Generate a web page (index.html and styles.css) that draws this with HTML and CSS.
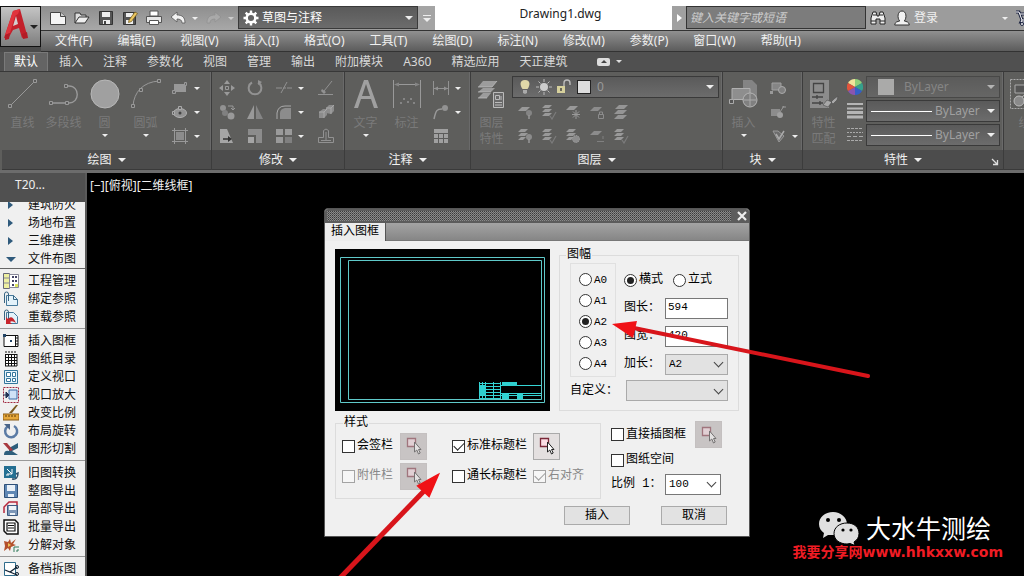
FILE: index.html
```html
<!DOCTYPE html>
<html lang="zh-CN">
<head>
    <meta charset="UTF-8">
    <meta name="viewport" content="width=device-width, initial-scale=1.0">
    <title>Drawing1.dwg</title>
    <link rel="stylesheet" href="styles.css">
</head>
<body>
    <!-- Icon sprite -->
    <svg class="sprite" aria-hidden="true">
        <symbol id="i-logo" viewBox="0 0 38 38">
            <path d="M4 27L12 3l7-2 7 26-5 3-3-10-6 2-4 7-5 1z" fill="#c3202b"/>
            <path d="M15 8l2 8-5 2z" fill="#d4d0d0"/>
            <path d="M12 3l7-2-2 5-3 2-5 17-5 2z" fill="#e0343d"/>
            <path d="M4 27l5-2-1 6-4 1zM21 26l5-2 1 6-5 1z" fill="#b21c26"/>
            <path d="M29 17h8l-4 4z" fill="#222"/>
        </symbol>
        <symbol id="i-new" viewBox="0 0 16 16"><path d="M.5 2.500h10l5 4v8H.5z" fill="#f4f4f4" stroke="#444"/><path d="M10.500 2.500v4h5" fill="#ccc" stroke="#444"/></symbol>
        <symbol id="i-open" viewBox="0 0 16 16"><path d="M1 13V3h5l1 2h5v2" fill="#ddd" stroke="#333"/><path d="M1 13l4-6h10l-4 6z" fill="#eee" stroke="#333"/></symbol>
        <symbol id="i-save" viewBox="0 0 16 16"><path d="M1.500 1.500h13v13h-13z" fill="#555" stroke="#333"/><path d="M4 2h8v5H4zM5 10h7v4H5z" fill="#eee"/><path d="M6 11h2v3H6z" fill="#444"/></symbol>
        <symbol id="i-saveas" viewBox="0 0 16 16"><path d="M1.500 2.500h12v12h-12z" fill="#555" stroke="#333"/><path d="M4 3h7v4H4zM4 10h7v4H4z" fill="#eee"/><path d="M7 10l6-8 2.500 1.500-6 8-3 1z" fill="#e9c460" stroke="#6b5417" stroke-width=".7"/></symbol>
        <symbol id="i-print" viewBox="0 0 16 16"><path d="M4 1h8v5H4z" fill="#fff" stroke="#555"/><path d="M.5 6.500h15v6H.5z" fill="#e6e6e6" stroke="#555"/><path d="M3.500 10.500h9v4h-9z" fill="#fff" stroke="#555"/></symbol>
        <symbol id="i-undo" viewBox="0 0 16 16"><path d="M1 7l6-5v3c5 0 8 2 8 8h-3c0-3-2-4-5-4v3z" fill="#f2f2f2" stroke="#555" stroke-width=".8"/></symbol>
        <symbol id="i-redo" viewBox="0 0 16 16"><path d="M15 7L9 2v3c-5 0-8 2-8 8h3c0-3 2-4 5-4v3z" fill="#b4b4b4" stroke="#8a8a8a" stroke-width=".8"/></symbol>
        <symbol id="i-gear" viewBox="0 0 16 16"><circle cx="8" cy="8" r="4.300" fill="none" stroke="#fff" stroke-width="2.500"/><path d="M8 .5v3M8 12.500v3M.5 8h3M12.500 8h3M2.700 2.700l2 2M11.300 11.300l2 2M2.700 13.300l2-2M11.300 4.700l2-2" stroke="#fff" stroke-width="2.400"/></symbol>
        <symbol id="i-find" viewBox="0 0 16 16"><path d="M1 14V8l2-6h3l1 4h2l1-4h3l2 6v6h-5V9H6v5z" fill="#eee" stroke="#222"/><path d="M1 11h5M10 11h5M3 5h3M10 5h3" stroke="#222"/></symbol>
        <symbol id="i-user" viewBox="0 0 16 16"><path d="M.7 15c0-3 3-3.500 5-4C3 8 3.500 1 8 1s5 7 2.300 10c2 .5 5 1 5 4z" fill="#f2f2f2" stroke="#333"/></symbol>
        <symbol id="i-cart" viewBox="0 0 16 16"><path d="M0 2h3l3 8h9l2-6H4M6 10l-1 2h10" fill="none" stroke="#1c2340" stroke-width="3"/><path d="M0 2h3l3 8h9l2-6H4M6 10l-1 2h10" fill="none" stroke="#fff"/><circle cx="6" cy="14" r="1.500" fill="#fff" stroke="#1c2340"/></symbol>

        <!-- Draw -->
        <symbol id="i-line" viewBox="0 0 30 30"><path d="M2 27L27 2" stroke="#999"/><path d="M.5 25.500h3v3h-3zM25.500.5h3v3h-3z" fill="#5b5b5a" stroke="#999"/></symbol>
        <symbol id="i-pline" viewBox="0 0 30 30"><path d="M1 24h19c11 0 11-17 0-17h-2" fill="none" stroke="#999" stroke-width="1.400"/><path d="M.5 22.500h3v3h-3zM16.500 22.500h3v3h-3zM15.500 5.500h3v3h-3z" fill="#5b5b5a" stroke="#999"/></symbol>
        <symbol id="i-circle" viewBox="0 0 30 30"><circle cx="15" cy="15" r="14" fill="#a0a0a0" stroke="#b8b8b8"/></symbol>
        <symbol id="i-arc" viewBox="0 0 30 30"><path d="M2 27C3 13 12 3 28 2" fill="none" stroke="#999"/><path d="M.5 25.500h3v3h-3zM8.500 9.500h3v3h-3zM26.500.5h3v3h-3z" fill="#5b5b5a" stroke="#999"/></symbol>
        <symbol id="i-rect" viewBox="0 0 16 16"><path d="M2 4h12v8H2z" fill="#989898"/><path d="M.5 10.500h3v3h-3zM12.500 2.500h2v3h-2z" fill="#666" stroke="#999"/></symbol>
        <symbol id="i-ellipse" viewBox="0 0 16 16"><ellipse cx="8" cy="9" rx="6.500" ry="4.500" fill="#929292" stroke="#b0b0b0"/><circle cx="8" cy="9" r="1.500" fill="#444"/><path d="M6.500 2.500h3v3h-3zM.5 7.500h2v3h-2z" fill="#666" stroke="#aaa"/></symbol>
        <symbol id="i-hatch" viewBox="0 0 16 16"><path d="M4 4h8v8H4z" fill="#8c8c8c"/><path d="M2.500 0v16M13.500 0v16M0 2.500h16M0 13.500h16" stroke="#999"/></symbol>

        <!-- Modify -->
        <symbol id="i-move" viewBox="0 0 16 16"><path d="M8 0l3 4H5zM8 16l3-4H5zM0 8l4-3v6zM16 8l-4-3v6z" fill="#9a9a9a"/><path d="M6.500 6.500h3v3h-3z" fill="none" stroke="#9a9a9a"/></symbol>
        <symbol id="i-rotate" viewBox="0 0 16 16"><path d="M5 2.500A6.300 6.300 0 1 0 11 2.500" fill="none" stroke="#929292" stroke-width="2"/><path d="M11 0v5l4-3z" fill="#929292"/></symbol>
        <symbol id="i-trim" viewBox="0 0 16 16"><path d="M0 8h6M7 8h3M11 8h5M5 13l6-11" stroke="#929292"/></symbol>
        <symbol id="i-erase" viewBox="0 0 16 16"><path d="M0 14.500h15M6 11l8-10" stroke="#929292"/><path d="M4 9l4 3-2 2-3-3z" fill="#929292"/></symbol>
        <symbol id="i-copy" viewBox="0 0 16 16"><circle cx="4" cy="4" r="3" fill="#929292"/><circle cx="6" cy="9" r="3" fill="#808080"/><circle cx="12" cy="12" r="3.500" fill="#999"/><path d="M9 2h5v4M12 4l2 2 2-2" fill="none" stroke="#999"/></symbol>
        <symbol id="i-mirror" viewBox="0 0 16 16"><path d="M7 1v14H0z" fill="#999"/><path d="M9 1v14h7z" fill="#858585"/></symbol>
        <symbol id="i-fillet" viewBox="0 0 16 16"><path d="M4 15V9q0-4 5-5h6v11z" fill="#8c8c8c"/><path d="M1 15V9q1-7 8-7h6" fill="none" stroke="#aaa"/></symbol>
        <symbol id="i-explode" viewBox="0 0 16 16"><path d="M1 8l4-3h4v6l-3 3H1zM8 4l3-3h5v6l-3 3-5-1z" fill="#8c8c8c"/><path d="M1 8h5v6M6 8l3-3M8 4h5v6M13 4l3-3" fill="none" stroke="#b0b0b0" stroke-width=".8"/></symbol>
        <symbol id="i-stretch" viewBox="0 0 16 16"><path d="M1 1h7l6 14H1z" fill="#a5a5a5"/><path d="M4 11h6" stroke="#333" stroke-width="1.500"/><path d="M9 8l4 3-4 3z" fill="#333"/></symbol>
        <symbol id="i-scale" viewBox="0 0 16 16"><path d="M1 1h14v14H9V7H1z" fill="#8c8c8c"/><path d="M1 9h6v6H1z" fill="#a5a5a5"/></symbol>
        <symbol id="i-array" viewBox="0 0 16 16"><path d="M0 1h7v6H0zM9 1h7v6H9zM0 9h7v6H0z" fill="#9a9a9a"/><path d="M9 9h7v6H9z" fill="#808080"/></symbol>
        <symbol id="i-offset" viewBox="0 0 16 16"><path d="M5.500 9.500v-7q2.500-3 5 0v7h5v5H.5v-5z" fill="none" stroke="#929292"/><path d="M3 12.500h10M8 4v8" fill="none" stroke="#929292"/></symbol>

        <!-- Annotate -->
        <symbol id="i-text" viewBox="0 0 30 30"><path d="M3 29L13 1h4l10 28h-4l-3-9H10l-3 9zM11 17h8L15 5z" fill="#a0a0a0"/></symbol>
        <symbol id="i-dim" viewBox="0 0 30 30"><path d="M1.500 1v28M28.500 1v28M3 5.500h24" stroke="#999"/><path d="M2 5.500l5-2v4zM28 5.500l-5-2v4zM8 23h2v2H8zM11 19h2v2h-2zM15 22h2v2h-2zM18 19h2v2h-2zM21 23h2v2h-2z" fill="#858585"/></symbol>
        <symbol id="i-linear" viewBox="0 0 16 16"><path d="M.5 1v14M15.500 1v14M1 8.500h14" stroke="#929292"/><path d="M1 8.500l4-2v4zM15 8.500l-4-2v4z" fill="#929292"/></symbol>
        <symbol id="i-leader" viewBox="0 0 16 16"><path d="M1 15C3 6 4 5 9 5" fill="none" stroke="#999" stroke-width="1.500"/><circle cx="12" cy="4" r="3" fill="#929292"/></symbol>
        <symbol id="i-table" viewBox="0 0 16 16"><path d="M1 1h14v14H1z" fill="#a0a0a0"/><path d="M1 5.500h14M1 10.500h14M5.500 5v10M10.500 5v10" stroke="#5b5b5a"/></symbol>

        <!-- Layers -->
        <symbol id="i-layers" viewBox="0 0 30 30"><path d="M6 2h14l-5 6H1zM6 9h12l-4 4H1zM6 14h8l-4 5H1z" fill="#9c9c9c"/><path d="M1 8h14l5-6M1 13h13M1 19h9" fill="none" stroke="#c4c4c4" stroke-width=".7"/><path d="M16.500 13.500h10v15h-10z" fill="#6a6a6a" stroke="#bbb"/><path d="M18.500 16.500h4v4h-4zM18 23.500h7M18 26h7M24 17v4" fill="none" stroke="#bbb"/></symbol>
        <symbol id="i-bulb" viewBox="0 0 16 16"><path d="M8 1c-6 0-5 6-2.500 9h5C13 7 14 1 8 1z" fill="#e0d8a8"/><path d="M6 11h4v3l-2 1-2-1z" fill="#aaa"/></symbol>
        <symbol id="i-sun" viewBox="0 0 16 16"><circle cx="8" cy="8" r="4" fill="#ccc"/><path d="M8 0v3M8 13v3M0 8h3M13 8h3M2.500 2.500l2 2M11.500 11.500l2 2M2.500 13.500l2-2M11.500 4.500l2-2" stroke="#bbb"/></symbol>
        <symbol id="i-lock" viewBox="0 0 16 16"><path d="M2 7h8v7H2z" fill="#d6d09c"/><path d="M9 7V4q0-3 3-3t3 3v2" fill="none" stroke="#bbb" stroke-width="1.400"/><path d="M6 9v3" stroke="#444" stroke-width="1.500"/></symbol>
        <symbol id="i-lay1" viewBox="0 0 16 16"><path d="M5 3h8l-4 4H1z" fill="#999"/><circle cx="12" cy="9" r="3" fill="#858585"/><path d="M12 11v4" stroke="#999" stroke-width="1.500"/></symbol>
        <symbol id="i-lay2" viewBox="0 0 16 16"><path d="M4 1h7L8 4H1zM4 5h7L8 8H1zM4 9h7l-3 3H1z" fill="#999"/><path d="M9 12l2 3 4-7" fill="none" stroke="#7c7c7c" stroke-width="1.200"/></symbol>
        <symbol id="i-lay3" viewBox="0 0 16 16"><path d="M5 2h8L9 6H1z" fill="#999"/><path d="M11 6v9M7 10.500h8M8 7.500l6 6M14 7.500l-6 6" stroke="#999"/></symbol>
        <symbol id="i-lay4" viewBox="0 0 16 16"><path d="M5 3h8L9 7H1z" fill="#8c8c8c"/><path d="M9.500 10.500h5v4h-5zM10.500 10V8h3v2" fill="none" stroke="#8c8c8c"/></symbol>
        <symbol id="i-lay5" viewBox="0 0 16 16"><path d="M6 1h9l-4 4H2zM5 6h9l-4 4H1zM5 11h9l-4 4H1z" fill="#959595"/></symbol>
        <symbol id="i-lay6" viewBox="0 0 16 16"><path d="M4 1h7L8 4H1zM4 5h7L8 8H1zM4 9h5l-3 3H1z" fill="#999"/><circle cx="12" cy="9" r="3" fill="#8c8c8c"/><path d="M12 11v4" stroke="#999" stroke-width="1.500"/></symbol>
        <symbol id="i-lay7" viewBox="0 0 16 16"><path d="M4 1h7L8 4H1zM4 5h7L8 8H1zM4 9h5l-3 3H1z" fill="#999"/><circle cx="11" cy="11" r="3.500" fill="#8c8c8c" stroke="#a5a5a5" stroke-dasharray="1 1"/></symbol>
        <symbol id="i-lay8" viewBox="0 0 16 16"><path d="M5 3h8L9 7H1z" fill="#8c8c8c"/><path d="M8 13.500h7M14 8v3" fill="none" stroke="#808080"/></symbol>

        <!-- Block -->
        <symbol id="i-insert" viewBox="0 0 30 30"><path d="M14 1h9l5 5v12H14z" fill="#848484"/><path d="M3 9.500h18v11H3z" fill="#8e8e8e" stroke="#b0b0b0"/><circle cx="21" cy="21" r="7" fill="#808080" stroke="#b5b5b5"/><path d="M21 15v12M15 21h12" stroke="#aaa"/><path d="M.5 20.500h4v4h-4z" fill="#555" stroke="#aaa"/></symbol>
        <symbol id="i-blk1" viewBox="0 0 16 16"><path d="M2 3h9v7H2z" fill="#858585" stroke="#a0a0a0"/><circle cx="12" cy="10" r="3.500" fill="#808080" stroke="#aaa"/><path d="M0 11h3v3H0z" fill="#999"/></symbol>
        <symbol id="i-blk2" viewBox="0 0 16 16"><path d="M1 5h9v7H1z" fill="#8c8c8c"/><circle cx="10" cy="11" r="3" fill="#a0a0a0"/><path d="M10 8l4-6M12 3h4" stroke="#999"/></symbol>
        <symbol id="i-blk3" viewBox="0 0 16 16"><path d="M3 3h5l6 5-5 6z" fill="#6c6c6c" stroke="#999"/><path d="M6 6l3 5 5-8" fill="none" stroke="#aaa" stroke-width="1.500"/></symbol>

        <!-- Properties -->
        <symbol id="i-match" viewBox="0 0 30 30"><path d="M1 1h19v28H1z" fill="#8c8c8c"/><path d="M4.500 4.500h10v9h-10zM3 18h11M3 24h11M8 16v4M11 22v4" fill="none" stroke="#444" stroke-width="1.300"/><path d="M14 26l4-5 5 2-4 5zM22 23l3-3 4-3-1 4-4 4z" fill="#a8a8a8" stroke="#4c4c4c" stroke-width=".6"/></symbol>
        <symbol id="i-wheel" viewBox="0 0 16 16"><path d="M8 8V0a8 8 0 0 0-7 4z" fill="#f0e49a"/><path d="M8 8V0a8 8 0 0 1 7 4z" fill="#8fd07a"/><path d="M8 8l7-4a8 8 0 0 1 0 8z" fill="#35a08c"/><path d="M8 8l7 4a8 8 0 0 1-7 4z" fill="#355fc8"/><path d="M8 8v8a8 8 0 0 1-7-4z" fill="#8a55b0"/><path d="M8 8l-7 4a8 8 0 0 1 0-8z" fill="#e2543c"/></symbol>
        <symbol id="i-weight" viewBox="0 0 16 16"><path d="M0 1h16M0 5.500h16" stroke="#b5b5b5" stroke-width="2"/><path d="M0 9.500h16M0 14h16" stroke="#b5b5b5" stroke-width="3"/></symbol>
        <symbol id="i-ltype" viewBox="0 0 16 16"><path d="M0 1.500h16M0 13.500h16" stroke="#aaa" stroke-dasharray="3 1"/><path d="M0 5.500h16" stroke="#aaa" stroke-dasharray="2 1"/><path d="M0 9.500h16" stroke="#aaa" stroke-dasharray="4 2"/></symbol>
        <symbol id="i-launch" viewBox="0 0 8 8"><path d="M1 1l5 5M6.500 2v4.500H2" fill="none" stroke="#ddd" stroke-width="1.300"/></symbol>
        <symbol id="i-group" viewBox="0 0 30 30"><path d="M.5.500h29v29H.5z" fill="none" stroke="#aaa" stroke-dasharray="2 1"/><path d="M5 6h14v8H5z" fill="#555" stroke="#aaa"/><circle cx="9" cy="22" r="5" fill="#8a8a8a" stroke="#bbb"/><path d="M12 18l5-4" stroke="#bbb"/></symbol>

        <!-- Tool palette -->
        <symbol id="i-project" viewBox="0 0 16 16"><path d="M.5.500h6v15h-6z" fill="#eef0a0" stroke="#667"/><path d="M6.500 1.500h9v13h-9zM1 5h5M1 10h5" fill="#fff" stroke="#889"/><path d="M9 3h2v2H9zM12 3h2v2h-2zM9 7h2v2H9zM12 7h2v2h-2zM9 11h2v2H9z" fill="#446"/><path d="M12 11h3v3h-3z" fill="#dbe45e"/></symbol>
        <symbol id="i-bind" viewBox="0 0 16 16"><path d="M3.500 4.500h7l4 4v6h-11z" fill="#e4f2fa" stroke="#47799b"/><path d="M10.500 4.500v4h4M1.500 12V3q0-2 2-2t2 2v7" fill="none" stroke="#386583"/></symbol>
        <symbol id="i-reload" viewBox="0 0 16 16"><path d="M3.500 3.500h7l4 4v7h-11z" fill="#e4f2fa" stroke="#47799b"/><path d="M1.500 11V3q0-2 2-2t2 2v7" fill="none" stroke="#386583"/><path d="M3 15V8l2 2q4-5 8 4-4-3-6-1l2 2z" fill="#c8242c"/></symbol>
        <symbol id="i-frame" viewBox="0 0 16 16"><path d="M1 2.500h14v11H1z" fill="#fff" stroke="#111"/><path d="M12.500 2v12" stroke="#111"/><path d="M7 7h2v2H7zM0 1h3v3H0z" fill="#246"/><path d="M13 5h2M13 8h2M13 11h2" stroke="#111"/></symbol>
        <symbol id="i-index" viewBox="0 0 16 16"><path d="M2 3h12v12H2z" fill="#fff"/><path d="M2.500 3v12M5.500 3v12M8.500 3v12M11.500 3v12M14 3v12M2 3.500h12M2 6.500h12M2 9.500h12M2 12.500h12M2 15h12" stroke="#111"/><path d="M2 1h12" stroke="#111" stroke-dasharray="2 1"/></symbol>
        <symbol id="i-views" viewBox="0 0 16 16"><path d="M1.500 1.500h13v13h-13z" fill="#e8f4fc" stroke="#33759b"/><path d="M3.500 3.500h4v4h-4zM9.500 3.500h3v4h-3zM3.500 9.500h4v3h-4zM9.500 9.500h3v3h-3z" fill="#fff" stroke="#33759b"/></symbol>
        <symbol id="i-zoomvp" viewBox="0 0 16 16"><path d="M.5.500h15v15H.5z" fill="none" stroke="#a02840" stroke-dasharray="2 1"/><path d="M6 3h8v9H6z" fill="#cfe1f7" stroke="#3768a8"/><path d="M0 8h5M3 5l3 3-3 3z" fill="#235" stroke="#235"/></symbol>
        <symbol id="i-ratio" viewBox="0 0 16 16"><path d="M0 9h16v6H0z" fill="#e6a83c" stroke="#8a5a14"/><path d="M3 10v2M6 10v2M9 10v2M12 10v2" stroke="#5a3808"/><path d="M6 8l7-8h2L9 8z" fill="#7b5a20"/></symbol>
        <symbol id="i-turn" viewBox="0 0 16 16"><path d="M4.500 3.500A6 6 0 1 0 11 3" fill="none" stroke="#5b7ba5" stroke-width="2.500"/><path d="M1 1h6v6z" fill="#4a6488"/></symbol>
        <symbol id="i-cut" viewBox="0 0 16 16"><path d="M6 7l9-5v5L9 10l6 4H1q0-5 5-4z" fill="#2f5f7c"/><path d="M0 2l4 0 6 7-3 1z" fill="#a83a40"/></symbol>
        <symbol id="i-convert" viewBox="0 0 16 16"><path d="M1 1h12v12H1z" fill="#246f92"/><path d="M4 4l5 5M9 4v5H4M3 10h3" stroke="#fff" fill="none"/><path d="M9 14q6 1 6-6l-2 1" fill="none" stroke="#31506b" stroke-width="1.500"/></symbol>
        <symbol id="i-disk" viewBox="0 0 16 16"><path d="M1.500 1.500h13v13h-13z" fill="#5f87b4" stroke="#2f5078"/><path d="M4 2h8v6H4zM5 11h6v3H5z" fill="#eaf1f8"/></symbol>
        <symbol id="i-part" viewBox="0 0 16 16"><path d="M1 12V6l5-5h8v4" fill="#f4e8ec" stroke="#b8283c" stroke-width="1.500"/><path d="M4.500 4.500h10v10h-10z" fill="#7d97b8" stroke="#3c5a80"/><path d="M6 5h7v4H6zM7 12h5v2H7z" fill="#eef3f8"/></symbol>
        <symbol id="i-batch" viewBox="0 0 16 16"><path d="M1 1h11l3 3v11H4l-3-3z" fill="#fff" stroke="#111" stroke-width="1.500"/><path d="M4 4h8v8H4zM5 6.500h6M5 9h6" fill="none" stroke="#111" stroke-width="1.200"/></symbol>
        <symbol id="i-burst" viewBox="0 0 16 16"><path d="M1 4l4 1 2-3 1 4 5-4-3 5 3 1-5 2-1 4-2-3-4 3 1-5z" fill="#b4502c"/><path d="M5 6l3 2-3 2z" fill="#eec35a"/><path d="M11 15v-5h5M14 15v-2h2" fill="none" stroke="#2f7a5a"/></symbol>
        <symbol id="i-split" viewBox="0 0 16 16"><path d="M1.500 1.500h11v13h-11z" fill="#fff" stroke="#2f6c8c"/><path d="M2 9l5 2 7-5M7 11l7 3" stroke="#123" stroke-width="1.300" fill="none"/><circle cx="14" cy="6" r="1.500" fill="none" stroke="#123"/><circle cx="14" cy="13" r="1.500" fill="none" stroke="#123"/></symbol>

        <symbol id="i-pick" viewBox="0 0 16 18"><path d="M1.500 1.500h8v8h-8z" fill="#fbdde4" stroke="#7a2838" stroke-width="1.300"/><path d="M8.500 5v10l2.300-2 1.700 4 1.700-1-1.700-3.500H15z" fill="#fff" stroke="#222"/></symbol>
        <symbol id="i-wechat" viewBox="0 0 40 34">
            <path d="M14 1C6 1 0 6 0 13c0 4 2 7 5 9l-1 5 5-3h5c8 0 14-5 14-11S22 1 14 1z" fill="#e0e0e0"/>
            <path d="M28 12c-7 0-13 4-13 10.500S21 33 28 33l3-.5 5 2-1-3.500c3-2 5-4.500 5-8.500C40 16 35 12 28 12z" fill="#e0e0e0" stroke="#000"/>
            <circle cx="9" cy="9" r="2"/><circle cx="20" cy="9" r="2"/><circle cx="24" cy="19" r="1.600"/><circle cx="32" cy="19" r="1.600"/>
        </symbol>
    </svg>

    <!-- Application header -->
    <header class="app-header">
        <button class="app-button" aria-label="应用程序"><svg><use href="#i-logo"/></svg></button>
        <div class="app-bars">
            <div class="title-bar">
                <div class="quick-access">
                    <button aria-label="新建"><svg class="icon"><use href="#i-new"/></svg></button>
                    <button aria-label="打开"><svg class="icon"><use href="#i-open"/></svg></button>
                    <button aria-label="保存"><svg class="icon"><use href="#i-save"/></svg></button>
                    <button aria-label="另存为"><svg class="icon"><use href="#i-saveas"/></svg></button>
                    <button aria-label="打印"><svg class="icon"><use href="#i-print"/></svg></button>
                    <button class="with-arrow" aria-label="放弃"><svg class="icon"><use href="#i-undo"/></svg></button>
                    <button class="with-arrow faded" aria-label="重做"><svg class="icon"><use href="#i-redo"/></svg></button>
                </div>
                <div class="combo workspace">
                    <svg class="icon"><use href="#i-gear"/></svg>
                    <select aria-label="工作空间"><option>草图与注释</option></select>
                </div>
                <button class="qa-more" aria-label="自定义快速访问工具栏"></button>
                <h1 class="doc-title">Drawing1.dwg</h1>
                <button class="info-toggle" aria-label="折叠"></button>
                <input class="search" type="text" placeholder="键入关键字或短语" aria-label="搜索">
                <div class="info-center">
                    <button aria-label="搜索"><svg class="icon"><use href="#i-find"/></svg></button>
                    <button class="login"><svg class="icon"><use href="#i-user"/></svg>登录</button>
                    <button class="cart" aria-label="应用商店"><svg class="icon"><use href="#i-cart"/></svg></button>
                </div>
            </div>
            <nav class="menu-bar">
                <a href="#">文件(F)</a>
                <a href="#">编辑(E)</a>
                <a href="#">视图(V)</a>
                <a href="#">插入(I)</a>
                <a href="#">格式(O)</a>
                <a href="#">工具(T)</a>
                <a href="#">绘图(D)</a>
                <a href="#">标注(N)</a>
                <a href="#">修改(M)</a>
                <a href="#">参数(P)</a>
                <a href="#">窗口(W)</a>
                <a href="#">帮助(H)</a>
            </nav>
        </div>
    </header>

    <nav class="ribbon-tabs">
        <a href="#" class="active">默认</a>
        <a href="#">插入</a>
        <a href="#">注释</a>
        <a href="#">参数化</a>
        <a href="#">视图</a>
        <a href="#">管理</a>
        <a href="#">输出</a>
        <a href="#">附加模块</a>
        <a href="#">A360</a>
        <a href="#">精选应用</a>
        <a href="#">天正建筑</a>
        <button class="ribbon-min" aria-label="最小化"><span></span></button>
    </nav>

    <!-- Ribbon -->
    <div class="ribbon">
        <section class="panel panel-draw">
            <div class="panel-body">
                <button class="big"><svg><use href="#i-line"/></svg>直线</button>
                <button class="big"><svg><use href="#i-pline"/></svg>多段线</button>
                <button class="big drop"><svg><use href="#i-circle"/></svg>圆</button>
                <button class="big drop"><svg><use href="#i-arc"/></svg>圆弧</button>
                <div class="tools tools-1">
                    <button class="with-arrow" aria-label="矩形"><svg class="icon"><use href="#i-rect"/></svg></button>
                    <button class="with-arrow" aria-label="椭圆"><svg class="icon"><use href="#i-ellipse"/></svg></button>
                    <button class="with-arrow" aria-label="图案填充"><svg class="icon"><use href="#i-hatch"/></svg></button>
                </div>
            </div>
            <h2>绘图</h2>
        </section>
        <section class="panel panel-modify">
            <div class="panel-body">
                <div class="tools tools-4">
                    <button aria-label="移动"><svg class="icon"><use href="#i-move"/></svg></button>
                    <button aria-label="旋转"><svg class="icon"><use href="#i-rotate"/></svg></button>
                    <button class="with-arrow" aria-label="修剪"><svg class="icon"><use href="#i-trim"/></svg></button>
                    <button aria-label="删除"><svg class="icon"><use href="#i-erase"/></svg></button>
                    <button aria-label="复制"><svg class="icon"><use href="#i-copy"/></svg></button>
                    <button aria-label="镜像"><svg class="icon"><use href="#i-mirror"/></svg></button>
                    <button class="with-arrow" aria-label="圆角"><svg class="icon"><use href="#i-fillet"/></svg></button>
                    <button aria-label="分解"><svg class="icon"><use href="#i-explode"/></svg></button>
                    <button aria-label="拉伸"><svg class="icon"><use href="#i-stretch"/></svg></button>
                    <button aria-label="缩放"><svg class="icon"><use href="#i-scale"/></svg></button>
                    <button class="with-arrow" aria-label="阵列"><svg class="icon"><use href="#i-array"/></svg></button>
                    <button aria-label="偏移"><svg class="icon"><use href="#i-offset"/></svg></button>
                </div>
            </div>
            <h2>修改</h2>
        </section>
        <section class="panel panel-note">
            <div class="panel-body">
                <button class="big drop"><svg><use href="#i-text"/></svg>文字</button>
                <button class="big"><svg><use href="#i-dim"/></svg>标注</button>
                <div class="tools tools-1">
                    <button class="with-arrow" aria-label="线性"><svg class="icon"><use href="#i-linear"/></svg></button>
                    <button class="with-arrow" aria-label="引线"><svg class="icon"><use href="#i-leader"/></svg></button>
                    <button aria-label="表格"><svg class="icon"><use href="#i-table"/></svg></button>
                </div>
            </div>
            <h2>注释</h2>
        </section>
        <section class="panel panel-layer">
            <div class="panel-body">
                <button class="big"><svg><use href="#i-layers"/></svg>图层<br>特性</button>
                <div class="layer-tools">
                    <div class="combo">
                        <svg class="icon"><use href="#i-bulb"/></svg>
                        <svg class="icon"><use href="#i-sun"/></svg>
                        <svg class="icon"><use href="#i-lock"/></svg>
                        <span class="swatch"></span>
                        <select aria-label="图层"><option>0</option></select>
                    </div>
                    <div class="tools tools-5">
                        <button aria-label="关"><svg class="icon"><use href="#i-lay1"/></svg></button>
                        <button aria-label="置为当前"><svg class="icon"><use href="#i-lay2"/></svg></button>
                        <button aria-label="冻结"><svg class="icon"><use href="#i-lay3"/></svg></button>
                        <button aria-label="锁定"><svg class="icon"><use href="#i-lay4"/></svg></button>
                        <button aria-label="匹配图层"><svg class="icon"><use href="#i-lay5"/></svg></button>
                        <button aria-label="打开所有图层"><svg class="icon"><use href="#i-lay6"/></svg></button>
                        <button aria-label="隔离"><svg class="icon"><use href="#i-lay2"/></svg></button>
                        <button aria-label="解冻所有图层"><svg class="icon"><use href="#i-lay7"/></svg></button>
                        <button aria-label="解锁"><svg class="icon"><use href="#i-lay8"/></svg></button>
                        <button aria-label="上一个"><svg class="icon"><use href="#i-lay2"/></svg></button>
                    </div>
                </div>
            </div>
            <h2>图层</h2>
        </section>
        <section class="panel panel-block">
            <div class="panel-body">
                <button class="big drop"><svg><use href="#i-insert"/></svg>插入</button>
                <div class="tools tools-1">
                    <button aria-label="创建"><svg class="icon"><use href="#i-blk1"/></svg></button>
                    <button aria-label="编辑"><svg class="icon"><use href="#i-blk2"/></svg></button>
                    <button class="with-arrow" aria-label="编辑属性"><svg class="icon"><use href="#i-blk3"/></svg></button>
                </div>
            </div>
            <h2>块</h2>
        </section>
        <section class="panel panel-props">
            <div class="panel-body">
                <button class="big"><svg><use href="#i-match"/></svg>特性<br>匹配</button>
                <div class="prop-list">
                    <svg class="icon"><use href="#i-wheel"/></svg>
                    <div class="combo faded"><span class="swatch"></span><select aria-label="颜色"><option>ByLayer</option></select></div>
                    <svg class="icon"><use href="#i-weight"/></svg>
                    <div class="combo"><span class="rule"></span><select aria-label="线宽"><option>ByLayer</option></select></div>
                    <svg class="icon"><use href="#i-ltype"/></svg>
                    <div class="combo"><span class="rule"></span><select aria-label="线型"><option>ByLayer</option></select></div>
                </div>
            </div>
            <h2>特性</h2>
            <button class="launcher" aria-label="特性选项板"><svg><use href="#i-launch"/></svg></button>
        </section>
        <section class="panel panel-group">
            <div class="panel-body">
                <button class="big"><svg><use href="#i-group"/></svg>组</button>
            </div>
            <h2></h2>
        </section>
    </div>

    <!-- Workspace -->
    <main class="workspace-area">
        <aside class="palette">
            <h2>T20...</h2>
            <div class="palette-scroll">
                <ul>
                    <li><a href="#" class="node">建筑防火</a></li>
                    <li><a href="#" class="node">场地布置</a></li>
                    <li><a href="#" class="node">三维建模</a></li>
                    <li class="major"><a href="#" class="node open">文件布图</a></li>
                    <li><a href="#"><svg class="icon"><use href="#i-project"/></svg>工程管理</a></li>
                    <li><a href="#"><svg class="icon"><use href="#i-bind"/></svg>绑定参照</a></li>
                    <li class="last"><a href="#"><svg class="icon"><use href="#i-reload"/></svg>重载参照</a></li>
                    <li><a href="#"><svg class="icon"><use href="#i-frame"/></svg>插入图框</a></li>
                    <li><a href="#"><svg class="icon"><use href="#i-index"/></svg>图纸目录</a></li>
                    <li><a href="#"><svg class="icon"><use href="#i-views"/></svg>定义视口</a></li>
                    <li><a href="#"><svg class="icon"><use href="#i-zoomvp"/></svg>视口放大</a></li>
                    <li><a href="#"><svg class="icon"><use href="#i-ratio"/></svg>改变比例</a></li>
                    <li><a href="#"><svg class="icon"><use href="#i-turn"/></svg>布局旋转</a></li>
                    <li class="last"><a href="#"><svg class="icon"><use href="#i-cut"/></svg>图形切割</a></li>
                    <li><a href="#"><svg class="icon"><use href="#i-convert"/></svg>旧图转换</a></li>
                    <li><a href="#"><svg class="icon"><use href="#i-disk"/></svg>整图导出</a></li>
                    <li><a href="#"><svg class="icon"><use href="#i-part"/></svg>局部导出</a></li>
                    <li><a href="#"><svg class="icon"><use href="#i-batch"/></svg>批量导出</a></li>
                    <li class="last"><a href="#"><svg class="icon"><use href="#i-burst"/></svg>分解对象</a></li>
                    <li><a href="#"><svg class="icon"><use href="#i-split"/></svg>备档拆图</a></li>
                </ul>
            </div>
        </aside>

        <div class="canvas">
            <p class="view-label">[−][俯视][二维线框]</p>

            <!-- Insert frame dialog -->
            <form class="dialog" onsubmit="return false">
                <div class="dialog-title"><span class="grip"></span><button type="button" aria-label="关闭"><svg viewBox="0 0 10 10"><path d="M1 1l8 8M9 1L1 9" stroke="#eee" stroke-width="2.200"/></svg></button></div>
                <div class="dialog-tabs"><button type="button">插入图框</button></div>
                <div class="dialog-body">
                    <div class="dialog-row">
                        <svg class="preview" viewBox="0 0 215 162">
                            <path d="M5.500 8.500h204v145h-204zM13.500 11.500h193v139h-193z" fill="none" stroke="#5fc9c9"/>
                            <path d="M144 134.500h22M144 137.500h22M144 140.500h22M144 143.500h22M144 146.500h62M144 149.500h22M166 136.500h40M166 144.500h40M144.500 133v17M147.500 133v17M150.500 133v17M158.500 133v17M165.500 133v17" stroke="#35d5d5"/>
                            <path d="M145 136h6v10h-6zM167 133h15v4h-15zM167 145h7v5h-7zM182 145h6v5h-6z" fill="#2fd0d0"/>
                        </svg>
                        <fieldset class="size-set">
                            <legend>图幅</legend>
                            <div class="size-grid">
                                <div class="paper">
                                    <label><input type="radio" name="paper">A0</label>
                                    <label><input type="radio" name="paper">A1</label>
                                    <label><input type="radio" name="paper" checked>A2</label>
                                    <label><input type="radio" name="paper">A3</label>
                                    <label><input type="radio" name="paper">A4</label>
                                </div>
                                <div class="dims">
                                    <div class="orient">
                                        <label><input type="radio" name="orient" checked>横式</label>
                                        <label><input type="radio" name="orient">立式</label>
                                    </div>
                                    <div class="field"><label for="len">图长：</label><input id="len" type="text" value="594"></div>
                                    <div class="field"><label for="wid">图宽：</label><input id="wid" type="text" value="420"></div>
                                    <div class="field"><label for="ext">加长：</label><span class="pick-list gray"><select id="ext"><option>A2</option></select></span></div>
                                </div>
                            </div>
                            <div class="field custom"><label for="custom">自定义：</label><span class="pick-list gray"><select id="custom"><option></option></select></span></div>
                        </fieldset>
                    </div>
                    <div class="dialog-row lower">
                        <fieldset class="style-set">
                            <legend>样式</legend>
                            <div class="style-grid">
                                <label><input type="checkbox">会签栏</label>
                                <button type="button" class="pick" disabled aria-label="选择会签栏"><svg><use href="#i-pick"/></svg></button>
                                <label><input type="checkbox" checked>标准标题栏</label>
                                <button type="button" class="pick" aria-label="选择标题栏"><svg><use href="#i-pick"/></svg></button>
                                <label class="off"><input type="checkbox" disabled>附件栏</label>
                                <button type="button" class="pick" disabled aria-label="选择附件栏"><svg><use href="#i-pick"/></svg></button>
                                <label><input type="checkbox">通长标题栏</label>
                                <label class="off"><input type="checkbox" checked disabled>右对齐</label>
                            </div>
                        </fieldset>
                        <div class="options">
                            <div class="option-row">
                                <label><input type="checkbox">直接插图框</label>
                                <button type="button" class="pick" disabled aria-label="选择图框"><svg><use href="#i-pick"/></svg></button>
                            </div>
                            <label><input type="checkbox">图纸空间</label>
                            <div class="field scale"><label for="scale">比例 1：</label><span class="pick-list"><select id="scale"><option>100</option></select></span></div>
                        </div>
                    </div>
                    <div class="actions">
                        <button type="submit">插入</button>
                        <button type="button">取消</button>
                    </div>
                </div>
            </form>

            <div class="watermark">
                <p class="brand"><svg><use href="#i-wechat"/></svg>大水牛测绘</p>
                <p class="site">我要分享网www.hhkxxw.com</p>
            </div>
        </div>
    </main>

    <!-- Callout arrows -->
    <svg class="callouts" viewBox="0 0 1024 576" aria-hidden="true">
        <path d="M868 376L634 328" stroke="#d8151b" stroke-width="4" stroke-linecap="round"/>
        <path d="M612 324l25-3-4 17z" fill="#f01216"/>
        <path d="M340 578L424 491" stroke="#d8151b" stroke-width="5"/>
        <path d="M438 475l-20 11 11 10z" fill="#f01216" stroke="#f01216" stroke-width="2"/>
    </svg>
</body>
</html>
```
FILE: styles.css
```css
/* Global Styles */
* {
    box-sizing: border-box;
}

body {
    margin: 0;
    height: 100vh;
    display: flex;
    flex-direction: column;
    overflow: hidden;
    background-color: #000;
    color: #f0f0f0;
    font-family: "Noto Sans", "Noto Sans CJK SC", sans-serif;
    font-size: 12px;
    line-height: 16px;
}

h1, h2, p, ul {
    margin: 0;
    padding: 0;
    font-size: 12px;
    font-weight: normal;
}

a {
    color: inherit;
    text-decoration: none;
}

button, input, select {
    margin: 0;
    padding: 0;
    border: none;
    background: none;
    color: inherit;
    font: inherit;
}

select {
    appearance: none;
    flex: 1;
    min-width: 0;
}

.sprite {
    position: absolute;
    width: 0;
    height: 0;
}

.icon {
    display: block;
    flex: none;
    width: 16px;
    height: 16px;
}

.faded {
    opacity: 0.6;
}

/* Header */
.app-header {
    display: flex;
    flex: none;
    background-color: #4b4b4b;
}

.app-button {
    width: 41px;
    height: 41px;
    margin-top: 6px;
    border: 1px solid #111;
    background: linear-gradient(#c4c4c4, #7e7e7e);
    box-shadow: 0 -6px #fff;
}

.app-button svg {
    display: block;
    width: 38px;
    height: 38px;
}

.app-bars {
    flex: 1;
    min-width: 0;
}

.title-bar {
    display: flex;
    align-items: stretch;
    height: 31px;
    border-top: 6px solid #fff;
    border-bottom: 1px solid #333;
    background-color: #9c9c9c;
}

.quick-access {
    display: flex;
    align-items: center;
    gap: 8px;
    width: 197px;
    padding-left: 9px;
    background: linear-gradient(#8e8e8e, #a8a8a8);
}

.with-arrow {
    display: flex;
    align-items: center;
    gap: 6px;
}

.with-arrow::after,
.combo::after,
.qa-more::after,
.drop::after,
.panel h2:not(:empty)::after,
.login::after {
    content: "";
    border: 4px solid transparent;
    border-top-color: #eee;
    border-bottom: none;
}

.with-arrow::after,
.drop::after,
.login::after {
    border-width: 3px;
    border-bottom: none;
}

.combo {
    display: flex;
    align-items: center;
    gap: 3px;
    padding: 0 4px;
    border: 1px solid #3a3a3a;
    background: linear-gradient(#5a5a5a, #6c6c6c);
}

.workspace {
    width: 180px;
    height: 23px;
    color: #fff;
}

.qa-more {
    width: 17px;
    height: 24px;
    background-color: #a4a4a4;
}

.qa-more::before {
    content: "";
    display: block;
    width: 8px;
    margin: 0 auto 2px;
    border-top: 1px solid #eee;
}

.qa-more::after {
    display: block;
    width: 0;
    margin: 0 auto;
}

.doc-title {
    flex: 1;
    padding-left: 14px;
    background-color: #fff;
    color: #222;
    font-size: 12px;
    text-align: center;
}

.info-toggle {
    width: 14px;
    padding-left: 5px;
    background-color: #a0a0a0;
}

.info-toggle::before {
    content: "";
    display: block;
    width: 0;
    border: 4px solid transparent;
    border-left: 5px solid #fff;
    border-right: none;
}

.search {
    width: 180px;
    height: 23px;
    padding: 0 3px;
    border: 1px solid #333;
    background-color: #7c7c7c;
}

.search::placeholder {
    color: #ccc;
    font-style: italic;
    opacity: 1;
}

.info-center {
    display: flex;
    align-items: center;
    gap: 8px;
    width: 158px;
    padding-left: 4px;
    overflow: hidden;
    background-color: #9c9c9c;
}

.login {
    display: flex;
    flex: 1;
    align-items: center;
    gap: 4px;
}

.login::after {
    margin-left: auto;
}

.cart {
    width: 8px;
    overflow: hidden;
}

.menu-bar {
    display: flex;
    align-items: center;
    gap: 25px;
    height: 21px;
    padding-left: 14px;
    background: linear-gradient(#909090, #5c5c5c);
    border-bottom: 1px solid #333;
}

/* Ribbon tabs */
.ribbon-tabs {
    display: flex;
    flex: none;
    align-items: stretch;
    height: 20px;
    padding-left: 4px;
    background-color: #505050;
    border-bottom: 1px solid #383838;
    color: #d8d8d8;
}

.ribbon-tabs a {
    padding: 2px 10px;
}

.ribbon-tabs .active {
    margin-right: 1px;
    padding: 1px 9px;
    background-color: #646464;
    border: 1px solid #7a7a7a;
    border-bottom: none;
    color: #fff;
}

.ribbon-min {
    display: flex;
    align-items: center;
    gap: 6px;
    margin-left: 20px;
}

.ribbon-min span {
    display: grid;
    place-items: center;
    width: 13px;
    height: 8px;
    border-radius: 2px;
    background-color: #ddd;
}

.ribbon-min span::before {
    content: "";
    border: 3px solid transparent;
    border-top: none;
    border-bottom-color: #444;
}

.ribbon-min::after {
    content: "";
    border: 3px solid transparent;
    border-top-color: #ddd;
    border-bottom: none;
}

/* Ribbon */
.ribbon {
    display: flex;
    flex: none;
    height: 101px;
    padding-left: 2px;
    overflow: hidden;
    background-color: #5e5e5c;
    border-bottom: 3px solid #6c6c6c;
}

.panel {
    position: relative;
    display: flex;
    flex: none;
    flex-direction: column;
    border-right: 1px solid #3c3c3c;
    box-shadow: inset -1px 0 #6a6a6a;
}

.panel-body {
    display: flex;
    flex: 1;
    padding-top: 4px;
}

.panel h2 {
    display: flex;
    align-items: center;
    justify-content: center;
    gap: 6px;
    height: 20px;
    background-color: #4c4c4c;
    border-bottom: 1px solid #3a3a3a;
}

.panel-draw { width: 210px; }
.panel-modify { width: 133px; }
.panel-note { width: 126px; }
.panel-layer { width: 252px; }
.panel-block { width: 80px; }
.panel-props { width: 201px; }
.panel-group { width: 60px; }

.big {
    display: flex;
    flex: none;
    flex-direction: column;
    align-items: center;
    width: 41px;
    padding-top: 3px;
    color: #7a7a7a;
}

.big svg {
    width: 30px;
    height: 30px;
    margin-bottom: 6px;
}

.drop::after {
    margin-top: 3px;
}

.tools {
    display: grid;
    grid-auto-rows: 24px;
    align-content: start;
    align-items: center;
}

.tools-1 {
    padding-left: 6px;
}

.tools-4 {
    grid-template-columns: 28px 29px 42px 16px;
    padding-left: 7px;
}

.tools-5 {
    grid-template-columns: repeat(5, 24px);
    padding-left: 5px;
}

.layer-tools {
    display: grid;
    flex: 1;
    grid-template-rows: 24px auto;
    padding-right: 3px;
}

.layer-tools .combo {
    height: 22px;
    color: #999;
}

.swatch {
    width: 14px;
    height: 14px;
    margin: 0 3px;
    background-color: #ddd;
    border: 1px solid #222;
}

.prop-list {
    display: grid;
    flex: 1;
    grid-template-columns: 16px 1fr;
    grid-auto-rows: 22px;
    align-items: center;
    gap: 2px 3px;
    padding: 0 3px;
}

.prop-list .combo {
    height: 22px;
    color: #a0a0a0;
}

.prop-list .swatch {
    width: 16px;
    height: 16px;
    margin: 0 7px;
    border: none;
}

.rule {
    width: 61px;
    border-top: 1px solid #fff;
}

.launcher {
    position: absolute;
    right: 4px;
    bottom: 4px;
}

.launcher svg {
    display: block;
    width: 8px;
    height: 8px;
}

/* Palette */
.workspace-area {
    display: flex;
    flex: 1;
    min-height: 0;
}

.palette {
    display: flex;
    flex: none;
    flex-direction: column;
    width: 87px;
    border-right: 2px solid #5a5a5a;
    background-color: #f0f0f0;
    color: #111;
}

.palette h2 {
    flex: none;
    height: 29px;
    padding: 4px 15px;
    background-color: #505050;
    color: #eee;
}

.palette-scroll {
    overflow: hidden;
}

.palette ul {
    margin-top: -6px;
    list-style: none;
}

.palette a {
    display: flex;
    align-items: center;
    gap: 9px;
    height: 18px;
    padding-left: 3px;
}

.palette .node::before {
    content: "";
    width: 0;
    margin: 0 6px 0 5px;
    border: 4px solid transparent;
    border-left: 5px solid #2f5a7c;
    border-right: none;
}

.palette .open::before {
    margin: 0 3px;
    border: 5px solid transparent;
    border-top-color: #2f5a7c;
    border-bottom: none;
}

.palette .major {
    margin-bottom: 3px;
    border-bottom: 1px solid #666;
}

.palette .last {
    margin-bottom: 3px;
    padding-bottom: 2px;
    border-bottom: 1px solid #999;
}

/* Canvas */
.canvas {
    position: relative;
    flex: 1;
}

.view-label {
    padding: 5px 3px;
}

/* Dialog */
.dialog {
    position: absolute;
    top: 35px;
    left: 237px;
    width: 426px;
    border: 1px solid #555;
    border-radius: 4px 4px 0 0;
    background-color: #f0f0f0;
    color: #000;
    font-family: "Liberation Mono", "Noto Sans CJK SC", monospace;
}

.dialog-title {
    display: flex;
    align-items: center;
    gap: 6px;
    height: 14px;
    padding: 0 2px;
    border-radius: 3px 3px 0 0;
    background-color: #5c5c5c;
}

.grip {
    flex: 1;
    height: 10px;
    background: conic-gradient(#3a3a3a 25%, #8a8a8a 0 50%, #5c5c5c 0 75%, #8a8a8a 0) 0 0 / 2px 2px;
}

.dialog-title svg {
    display: block;
    width: 10px;
    height: 10px;
}

.dialog-tabs {
    height: 18px;
    background: linear-gradient(#a4a4a4, #868686);
    border-bottom: 1px solid #777;
}

.dialog-tabs button {
    height: 18px;
    padding: 0 6px;
    background-color: #ececec;
    border-right: 1px solid #555;
}

.dialog-body {
    padding: 6px 10px 11px;
}

.dialog-row {
    display: flex;
    gap: 9px;
}

.preview {
    flex: none;
    width: 215px;
    height: 162px;
    margin-top: 2px;
    background-color: #000;
}

fieldset {
    min-width: 0;
    margin: 0;
    padding: 0 10px;
    border: 1px solid #dcdcdc;
}

legend {
    margin-left: -4px;
    padding: 0 1px;
}

.size-set {
    flex: 1;
    height: 164px;
}

.dialog label {
    display: flex;
    align-items: center;
    gap: 2px;
    white-space: nowrap;
}

.dialog input[type="radio"],
.dialog input[type="checkbox"] {
    appearance: none;
    display: grid;
    place-items: center;
    flex: none;
    width: 13px;
    height: 13px;
    border: 1px solid #333;
    background-color: #fff;
}

.dialog input[type="radio"] {
    border-radius: 50%;
}

.dialog input[type="radio"]:checked::before {
    content: "";
    width: 7px;
    height: 7px;
    border-radius: 50%;
    background-color: #222;
}

.dialog input[type="checkbox"]:checked::before {
    content: "";
    width: 9px;
    height: 5px;
    margin-bottom: 3px;
    border: 1px solid #222;
    border-width: 0 0 1px 1px;
    transform: rotate(-45deg);
}

.dialog input:disabled {
    opacity: 0.4;
}

.size-grid {
    display: flex;
    gap: 8px;
}

.paper {
    width: 46px;
    height: 114px;
    padding: 5px 0 0 8px;
    border: 1px solid #e0e0e0;
    font-size: 11px;
}

.paper label {
    height: 21px;
}

.dims {
    display: grid;
    flex: 1;
    grid-auto-rows: 28px;
    align-content: start;
    align-items: center;
    padding-top: 3px;
}

.orient {
    display: flex;
    gap: 10px;
}

.field {
    display: flex;
    align-items: center;
    justify-content: space-between;
}

.field input,
.pick-list {
    width: 63px;
    height: 21px;
    border: 1px solid #777;
    background-color: #fff;
    font-size: 11px;
}

.field input {
    padding: 0 2px 3px;
}

.pick-list {
    display: flex;
    align-items: center;
    padding: 0 5px 0 3px;
}

.pick-list::after {
    content: "";
    width: 6px;
    height: 6px;
    margin-bottom: 3px;
    border: 1px solid #444;
    border-width: 0 1px 1px 0;
    transform: rotate(45deg);
}

.gray {
    background-color: #e2e2e2;
    border-color: #aaa;
}

.custom {
    margin-top: 2px;
}

.custom .pick-list {
    width: 102px;
}

.lower {
    gap: 10px;
    margin-top: 4px;
}

.style-set {
    width: 266px;
    height: 84px;
    padding: 0 6px;
}

.style-set legend {
    margin-left: 1px;
}

.style-grid {
    display: grid;
    grid-template-columns: 58px 52px 81px auto;
    grid-auto-rows: 30px;
    align-items: center;
}

.off {
    color: #888;
}

.pick {
    display: grid;
    place-items: center;
    width: 27px;
    height: 27px;
    border: 1px solid #aaa;
    background-color: #e4e0e0;
}

.pick svg {
    width: 16px;
    height: 18px;
}

.pick:disabled {
    border-color: #c4c0c0;
    background-color: #c8c4c4;
}

.pick:disabled svg {
    opacity: 0.5;
}

.options {
    display: grid;
    grid-template-rows: 27px 24px 24px;
    align-content: start;
    align-items: center;
    padding-top: 6px;
}

.option-row {
    display: flex;
    gap: 9px;
}

.scale {
    width: 110px;
}

.scale .pick-list {
    width: 56px;
}

.actions {
    display: flex;
    justify-content: flex-end;
    gap: 31px;
    margin-top: 7px;
    padding-right: 12px;
}

.actions button {
    width: 66px;
    height: 19px;
    border: 1px solid #aaa;
    background-color: #e2e2e2;
}

/* Watermark and callouts */
.watermark {
    position: absolute;
    right: 21px;
    bottom: 17px;
}

.brand {
    display: flex;
    align-items: center;
    justify-content: flex-end;
    gap: 7px;
    padding-right: 12px;
    color: #fff;
    font-size: 25px;
    line-height: 30px;
}

.brand svg {
    width: 40px;
    height: 34px;
}

.site {
    color: #f01c24;
    font-family: "DejaVu Sans", "Noto Sans CJK SC", sans-serif;
    font-size: 13px;
    font-size: 14px;
    font-weight: bold;
    line-height: 14px;
}

.callouts {
    position: absolute;
    top: 0;
    left: 0;
    width: 100%;
    height: 100%;
    pointer-events: none;
}
```
